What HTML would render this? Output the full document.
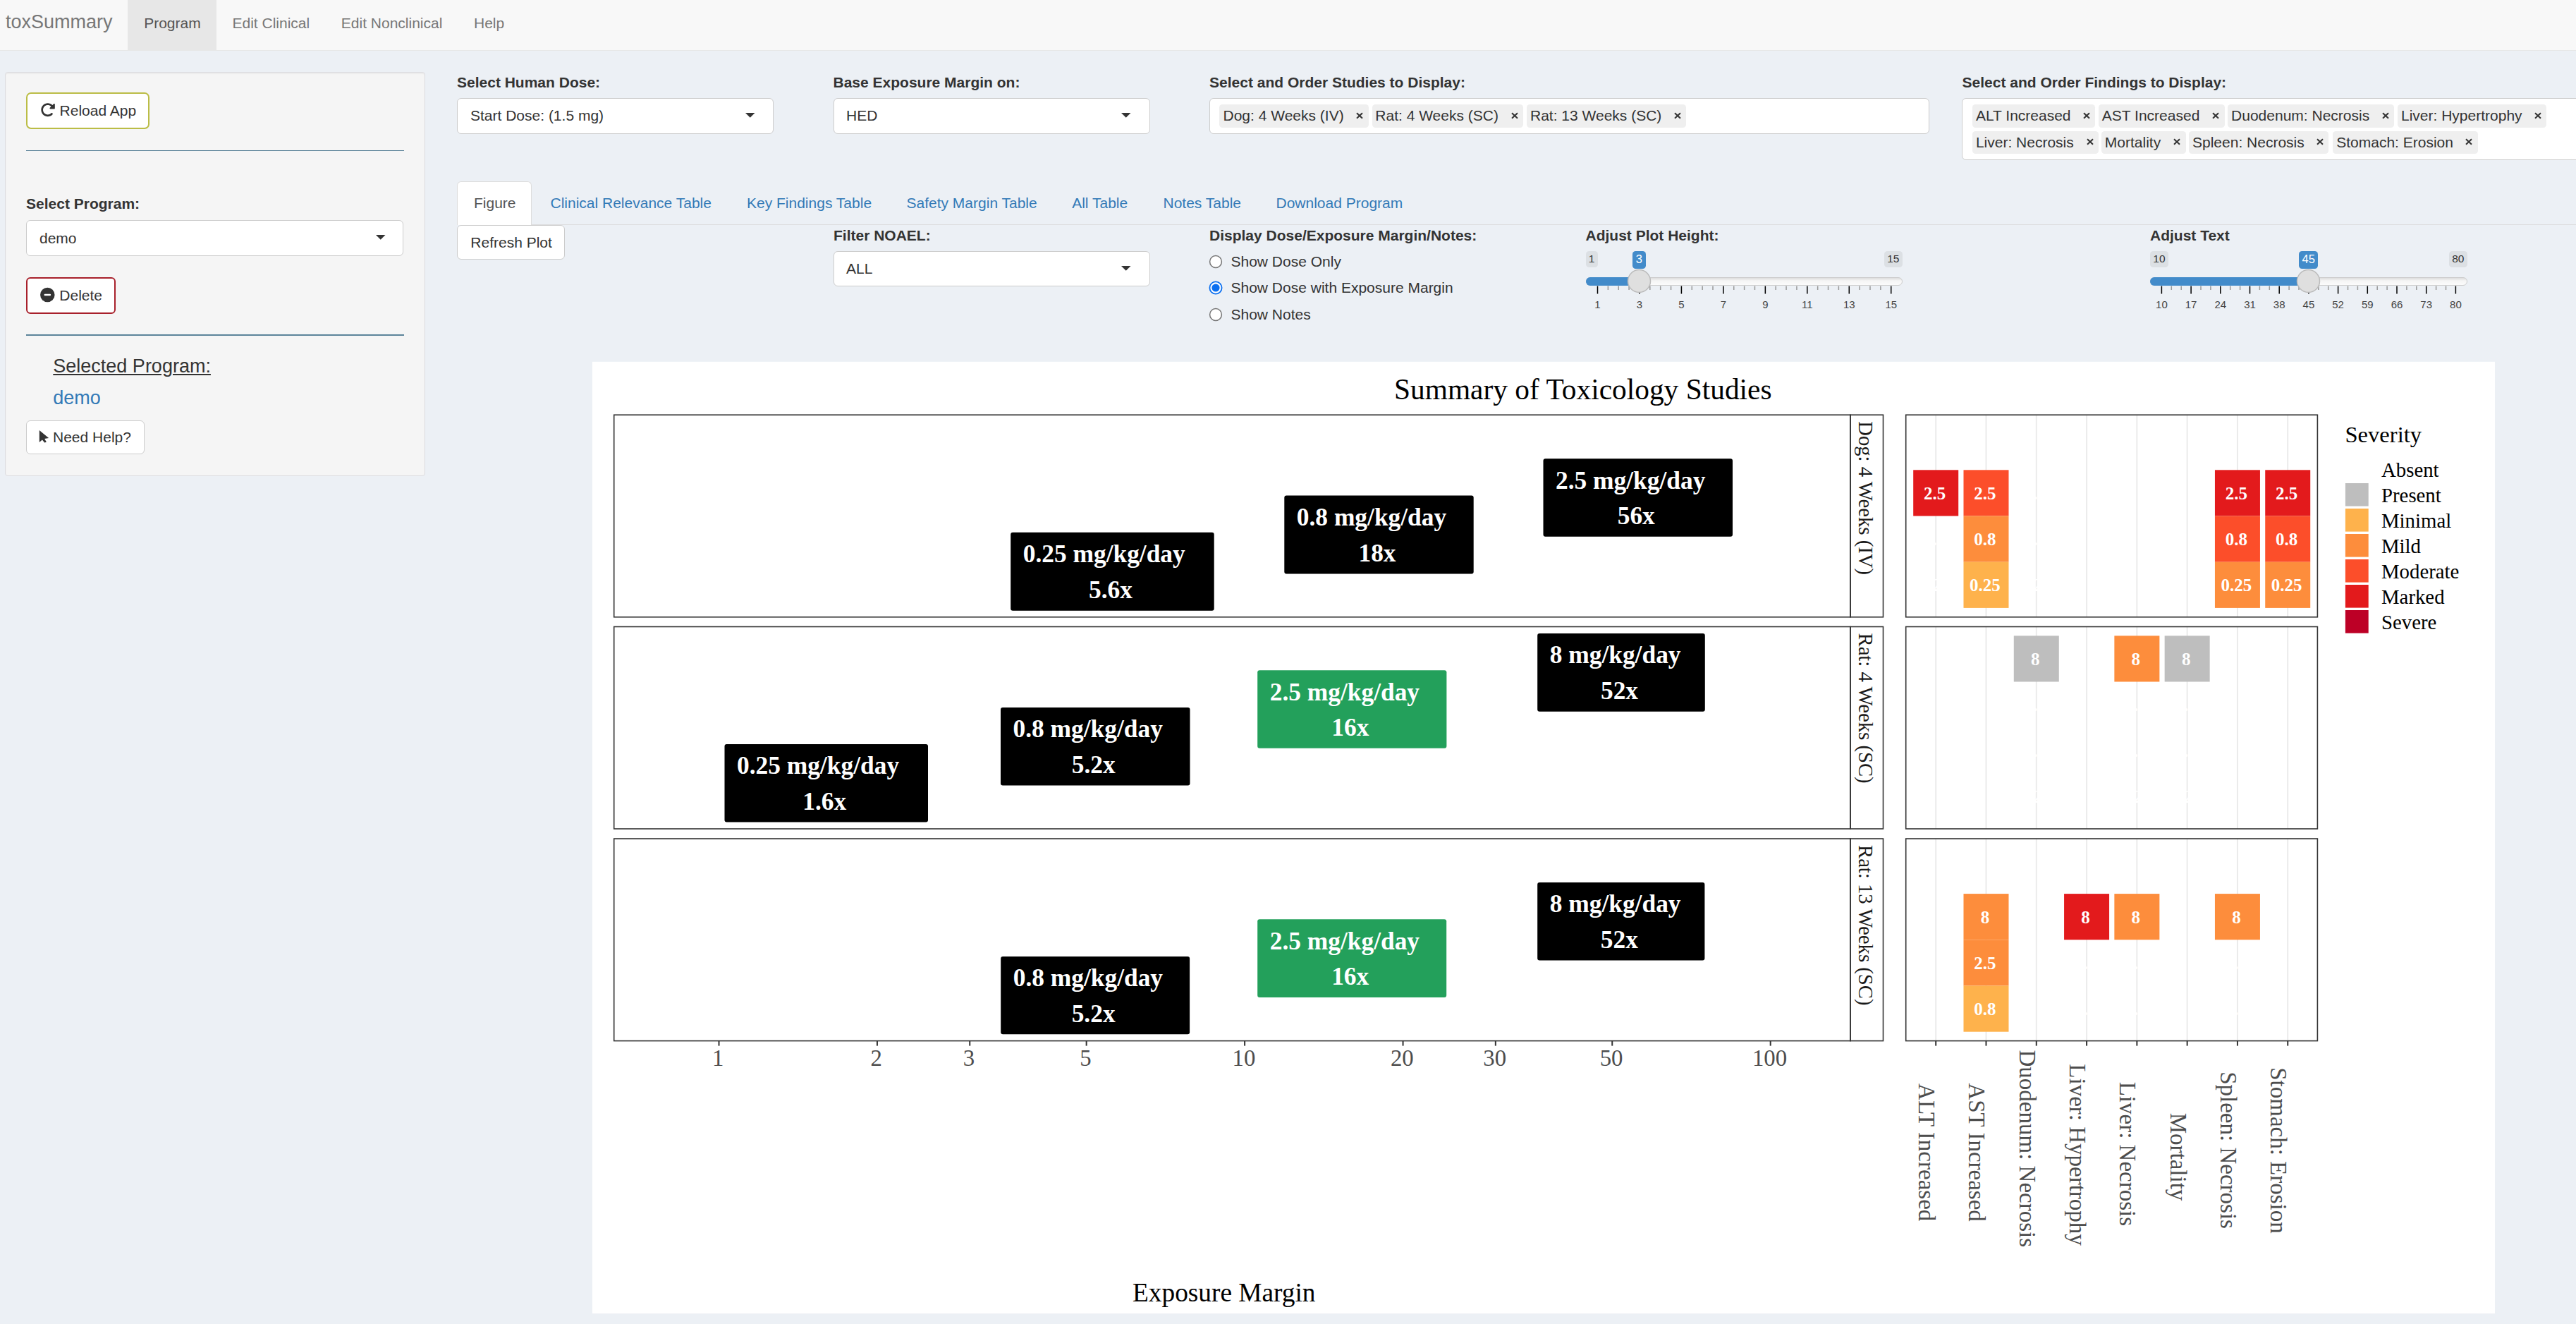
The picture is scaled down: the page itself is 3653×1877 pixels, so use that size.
<!DOCTYPE html>
<html><head><meta charset="utf-8"><title>toxSummary</title><style>
html,body{margin:0;padding:0;}
body{width:3653px;height:1877px;overflow:hidden;position:relative;background:#ECF0F5;font-family:"Liberation Sans",sans-serif;}
.t{position:absolute;line-height:1;white-space:nowrap;}
.b{position:absolute;box-sizing:border-box;}
svg{position:absolute;left:0;top:0;}
</style></head><body>
<div class="b" style="left:0.00px;top:0.00px;width:3653.00px;height:71.50px;background:#F8F8F8;border-bottom:1.5px solid #E7E7E7;"></div>
<div class="b" style="left:181.00px;top:0.00px;width:125.70px;height:71.50px;background:#E7E7E7;"></div>
<span class="t" style="left:8.00px;top:18.24px;font-size:27px;color:#777;font-weight:normal;">toxSummary</span>
<span class="t" style="left:204.20px;top:22.32px;font-size:21px;color:#555;font-weight:normal;">Program</span>
<span class="t" style="left:329.50px;top:22.32px;font-size:21px;color:#777;font-weight:normal;">Edit Clinical</span>
<span class="t" style="left:483.80px;top:22.32px;font-size:21px;color:#777;font-weight:normal;">Edit Nonclinical</span>
<span class="t" style="left:672.00px;top:22.32px;font-size:21px;color:#777;font-weight:normal;">Help</span>
<div class="b" style="left:6.60px;top:101.60px;width:596.80px;height:573.60px;background:#F5F5F5;border:1.5px solid #DCDCE0;border-radius:4px;box-shadow:inset 0 1.5px 1.5px rgba(0,0,0,.05);"></div>
<div class="b" style="left:36.80px;top:130.80px;width:175.10px;height:52.20px;background:#fff;border:2px solid #BBBD46;border-radius:7px;"></div>
<svg style="left:56.5px;top:144.5px" width="21.5" height="21.5" viewBox="0 0 512 512"><path fill="#333" d="M463.5 224H472c13.3 0 24-10.7 24-24V72c0-9.7-5.8-18.5-14.8-22.2s-19.3-1.7-26.2 5.2L413.4 96.6c-87.6-86.5-228.7-86.2-315.8 1c-87.5 87.5-87.5 229.3 0 316.8s229.3 87.5 316.8 0c12.5-12.5 12.5-32.8 0-45.3s-32.8-12.5-45.3 0c-62.5 62.5-163.8 62.5-226.3 0s-62.5-163.8 0-226.3c62.2-62.2 162.7-62.5 225.3-1L327 183c-6.9 6.9-8.9 17.2-5.2 26.2s12.5 14.8 22.2 14.8H463.5z"/></svg>
<span class="t" style="left:84.60px;top:146.22px;font-size:21px;color:#333;font-weight:normal;">Reload App</span>
<div class="b" style="left:37.00px;top:212.50px;width:535.50px;height:1.50px;background:#5B8399;"></div>
<span class="t" style="left:37.00px;top:278.47px;font-size:21px;color:#333;font-weight:bold;">Select Program:</span>
<div class="b" style="left:37.00px;top:312.00px;width:535.00px;height:50.50px;background:#fff;border:1.5px solid #CCC;border-radius:6px;"></div>
<span class="t" style="left:56.00px;top:326.92px;font-size:21px;color:#333;font-weight:normal;">demo</span>
<svg style="left:533.15px;top:333.3px" width="14" height="8"><path d="M0 0 L13.5 0 L6.75 6.75 Z" fill="#333"/></svg>
<div class="b" style="left:36.70px;top:392.70px;width:127.00px;height:52.00px;background:#fff;border:2px solid #A8202B;border-radius:6px;"></div>
<svg style="left:56px;top:406px" width="23" height="23"><circle cx="11.3" cy="12" r="10.25" fill="#333"/><rect x="6.5" y="10.7" width="9.6" height="2.6" rx="1.2" fill="#fff"/></svg>
<span class="t" style="left:84.30px;top:407.62px;font-size:21px;color:#333;font-weight:normal;">Delete</span>
<div class="b" style="left:37.00px;top:474.00px;width:535.50px;height:1.50px;background:#5B8399;"></div>
<span class="t" style="left:75.30px;top:506.14px;font-size:27px;color:#333;font-weight:normal;text-decoration:underline;">Selected Program:</span>
<span class="t" style="left:75.30px;top:551.34px;font-size:27px;color:#337AB7;font-weight:normal;">demo</span>
<div class="b" style="left:37.00px;top:595.50px;width:167.50px;height:48.90px;background:#fff;border:1.5px solid #CCC;border-radius:6px;"></div>
<svg style="left:0;top:0" width="80" height="640"><path d="M55.8 609.9 L55.8 627.0 L59.9 623.4 L63.2 627.6 L65.9 626.7 L63.2 621.9 L69.1 621.1 Z" fill="#333"/></svg>
<span class="t" style="left:75.00px;top:609.12px;font-size:21px;color:#333;font-weight:normal;">Need Help?</span>
<span class="t" style="left:648.00px;top:105.97px;font-size:21px;color:#333;font-weight:bold;">Select Human Dose:</span>
<span class="t" style="left:1181.50px;top:105.97px;font-size:21px;color:#333;font-weight:bold;">Base Exposure Margin on:</span>
<span class="t" style="left:1715.00px;top:105.97px;font-size:21px;color:#333;font-weight:bold;">Select and Order Studies to Display:</span>
<span class="t" style="left:2782.50px;top:105.97px;font-size:21px;color:#333;font-weight:bold;">Select and Order Findings to Display:</span>
<div class="b" style="left:648.00px;top:138.90px;width:448.80px;height:50.90px;background:#fff;border:1.5px solid #CCC;border-radius:6px;"></div>
<span class="t" style="left:667.00px;top:153.22px;font-size:21px;color:#333;font-weight:normal;">Start Dose: (1.5 mg)</span>
<svg style="left:1057.00px;top:160.00px" width="14" height="8"><path d="M0 0 L13.5 0 L6.75 6.75 Z" fill="#333"/></svg>
<div class="b" style="left:1181.50px;top:138.90px;width:449.70px;height:50.90px;background:#fff;border:1.5px solid #CCC;border-radius:6px;"></div>
<span class="t" style="left:1200.00px;top:153.22px;font-size:21px;color:#333;font-weight:normal;">HED</span>
<svg style="left:1590.00px;top:160.00px" width="14" height="8"><path d="M0 0 L13.5 0 L6.75 6.75 Z" fill="#333"/></svg>
<div class="b" style="left:1715.20px;top:138.90px;width:1021.05px;height:50.90px;background:#fff;border:1.5px solid #CCC;border-radius:6px;"></div>
<div class="b" style="left:1729.25px;top:148.25px;width:211.25px;height:32.25px;background:#EFEFEF;border-radius:4.5px;"></div>
<span class="t" style="left:1734.50px;top:152.97px;font-size:21px;color:#333;font-weight:normal;">Dog: 4 Weeks (IV)</span>
<svg style="left:1922.25px;top:157.57px" width="12" height="12"><path d="M2.0 2.3 L10.0 9.7 M10.0 2.3 L2.0 9.7" stroke="#333" stroke-width="2.1"/></svg>
<div class="b" style="left:1945.50px;top:148.25px;width:214.00px;height:32.25px;background:#EFEFEF;border-radius:4.5px;"></div>
<span class="t" style="left:1950.30px;top:152.97px;font-size:21px;color:#333;font-weight:normal;">Rat: 4 Weeks (SC)</span>
<svg style="left:2141.50px;top:157.57px" width="12" height="12"><path d="M2.0 2.3 L10.0 9.7 M10.0 2.3 L2.0 9.7" stroke="#333" stroke-width="2.1"/></svg>
<div class="b" style="left:2165.00px;top:148.25px;width:225.75px;height:32.25px;background:#EFEFEF;border-radius:4.5px;"></div>
<span class="t" style="left:2170.00px;top:152.97px;font-size:21px;color:#333;font-weight:normal;">Rat: 13 Weeks (SC)</span>
<svg style="left:2372.75px;top:157.57px" width="12" height="12"><path d="M2.0 2.3 L10.0 9.7 M10.0 2.3 L2.0 9.7" stroke="#333" stroke-width="2.1"/></svg>
<div class="b" style="left:2782.30px;top:138.90px;width:917.70px;height:88.10px;background:#fff;border:1.5px solid #CCC;border-radius:6px;"></div>
<div class="b" style="left:2797.10px;top:148.25px;width:174.30px;height:32.25px;background:#EFEFEF;border-radius:4.5px;"></div>
<span class="t" style="left:2801.90px;top:153.22px;font-size:21px;color:#333;font-weight:normal;">ALT Increased</span>
<svg style="left:2952.60px;top:157.57px" width="12" height="12"><path d="M2.0 2.3 L10.0 9.7 M10.0 2.3 L2.0 9.7" stroke="#333" stroke-width="2.1"/></svg>
<div class="b" style="left:2976.00px;top:148.25px;width:178.50px;height:32.25px;background:#EFEFEF;border-radius:4.5px;"></div>
<span class="t" style="left:2980.80px;top:153.22px;font-size:21px;color:#333;font-weight:normal;">AST Increased</span>
<svg style="left:3136.00px;top:157.57px" width="12" height="12"><path d="M2.0 2.3 L10.0 9.7 M10.0 2.3 L2.0 9.7" stroke="#333" stroke-width="2.1"/></svg>
<div class="b" style="left:3159.30px;top:148.25px;width:235.70px;height:32.25px;background:#EFEFEF;border-radius:4.5px;"></div>
<span class="t" style="left:3164.10px;top:153.22px;font-size:21px;color:#333;font-weight:normal;">Duodenum: Necrosis</span>
<svg style="left:3376.90px;top:157.57px" width="12" height="12"><path d="M2.0 2.3 L10.0 9.7 M10.0 2.3 L2.0 9.7" stroke="#333" stroke-width="2.1"/></svg>
<div class="b" style="left:3400.20px;top:148.25px;width:211.10px;height:32.25px;background:#EFEFEF;border-radius:4.5px;"></div>
<span class="t" style="left:3405.00px;top:153.22px;font-size:21px;color:#333;font-weight:normal;">Liver: Hypertrophy</span>
<svg style="left:3592.80px;top:157.57px" width="12" height="12"><path d="M2.0 2.3 L10.0 9.7 M10.0 2.3 L2.0 9.7" stroke="#333" stroke-width="2.1"/></svg>
<div class="b" style="left:2797.10px;top:185.70px;width:178.50px;height:31.90px;background:#EFEFEF;border-radius:4.5px;"></div>
<span class="t" style="left:2801.90px;top:190.82px;font-size:21px;color:#333;font-weight:normal;">Liver: Necrosis</span>
<svg style="left:2957.50px;top:194.85px" width="12" height="12"><path d="M2.0 2.3 L10.0 9.7 M10.0 2.3 L2.0 9.7" stroke="#333" stroke-width="2.1"/></svg>
<div class="b" style="left:2980.00px;top:185.70px;width:119.70px;height:31.90px;background:#EFEFEF;border-radius:4.5px;"></div>
<span class="t" style="left:2984.80px;top:190.82px;font-size:21px;color:#333;font-weight:normal;">Mortality</span>
<svg style="left:3081.20px;top:194.85px" width="12" height="12"><path d="M2.0 2.3 L10.0 9.7 M10.0 2.3 L2.0 9.7" stroke="#333" stroke-width="2.1"/></svg>
<div class="b" style="left:3104.20px;top:185.70px;width:198.30px;height:31.90px;background:#EFEFEF;border-radius:4.5px;"></div>
<span class="t" style="left:3109.00px;top:190.82px;font-size:21px;color:#333;font-weight:normal;">Spleen: Necrosis</span>
<svg style="left:3284.30px;top:194.85px" width="12" height="12"><path d="M2.0 2.3 L10.0 9.7 M10.0 2.3 L2.0 9.7" stroke="#333" stroke-width="2.1"/></svg>
<div class="b" style="left:3308.40px;top:185.70px;width:205.60px;height:31.90px;background:#EFEFEF;border-radius:4.5px;"></div>
<span class="t" style="left:3313.20px;top:190.82px;font-size:21px;color:#333;font-weight:normal;">Stomach: Erosion</span>
<svg style="left:3495.00px;top:194.85px" width="12" height="12"><path d="M2.0 2.3 L10.0 9.7 M10.0 2.3 L2.0 9.7" stroke="#333" stroke-width="2.1"/></svg>
<div class="b" style="left:648.00px;top:317.50px;width:3005.00px;height:1.50px;background:#DDD;"></div>
<div class="b" style="left:648.00px;top:256.80px;width:105.80px;height:62.20px;background:#fff;border:1.5px solid #DDD;border-bottom:none;border-radius:6px 6px 0 0;"></div>
<span class="t" style="left:672.00px;top:277.22px;font-size:21px;color:#555;font-weight:normal;">Figure</span>
<span class="t" style="left:780.50px;top:277.22px;font-size:21px;color:#337AB7;font-weight:normal;">Clinical Relevance Table</span>
<span class="t" style="left:1059.00px;top:277.22px;font-size:21px;color:#337AB7;font-weight:normal;">Key Findings Table</span>
<span class="t" style="left:1285.50px;top:277.22px;font-size:21px;color:#337AB7;font-weight:normal;">Safety Margin Table</span>
<span class="t" style="left:1520.20px;top:277.22px;font-size:21px;color:#337AB7;font-weight:normal;">All Table</span>
<span class="t" style="left:1649.50px;top:277.22px;font-size:21px;color:#337AB7;font-weight:normal;">Notes Table</span>
<span class="t" style="left:1809.50px;top:277.22px;font-size:21px;color:#337AB7;font-weight:normal;">Download Program</span>
<div class="b" style="left:648.00px;top:318.80px;width:153.00px;height:49.20px;background:#fff;border:1.5px solid #CCC;border-radius:6px;"></div>
<span class="t" style="left:667.30px;top:333.22px;font-size:21px;color:#333;font-weight:normal;">Refresh Plot</span>
<span class="t" style="left:1182.00px;top:322.72px;font-size:21px;color:#333;font-weight:bold;">Filter NOAEL:</span>
<div class="b" style="left:1181.50px;top:355.90px;width:449.70px;height:50.60px;background:#fff;border:1.5px solid #CCC;border-radius:6px;"></div>
<span class="t" style="left:1200.00px;top:370.22px;font-size:21px;color:#333;font-weight:normal;">ALL</span>
<svg style="left:1590.00px;top:377.00px" width="14" height="8"><path d="M0 0 L13.5 0 L6.75 6.75 Z" fill="#333"/></svg>
<span class="t" style="left:1715.00px;top:322.92px;font-size:21px;color:#333;font-weight:bold;">Display Dose/Exposure Margin/Notes:</span>
<svg style="left:1714.0px;top:360.9px" width="20" height="20"><circle cx="10" cy="10" r="8.4" fill="#fff" stroke="#767676" stroke-width="1.5"/></svg>
<span class="t" style="left:1745.50px;top:359.72px;font-size:21px;color:#333;font-weight:normal;">Show Dose Only</span>
<svg style="left:1714.0px;top:398.4px" width="20" height="20"><circle cx="10" cy="10" r="8.6" fill="#fff" stroke="#0B6FF0" stroke-width="1.8"/><circle cx="10" cy="10" r="5.6" fill="#0B6FF0"/></svg>
<span class="t" style="left:1745.50px;top:396.82px;font-size:21px;color:#333;font-weight:normal;">Show Dose with Exposure Margin</span>
<svg style="left:1714.0px;top:436.0px" width="20" height="20"><circle cx="10" cy="10" r="8.4" fill="#fff" stroke="#767676" stroke-width="1.5"/></svg>
<span class="t" style="left:1745.50px;top:434.72px;font-size:21px;color:#333;font-weight:normal;">Show Notes</span>
<span class="t" style="left:2248.50px;top:322.92px;font-size:21px;color:#333;font-weight:bold;">Adjust Plot Height:</span>
<span class="t" style="left:3049.00px;top:322.92px;font-size:21px;color:#333;font-weight:bold;">Adjust Text</span>
<div class="b" style="left:2248.75px;top:356.00px;width:16.75px;height:22.75px;background:rgba(0,0,0,0.065);border-radius:4.5px;"></div>
<span class="t" style="left:2248.75px;width:16.75px;text-align:center;top:359.48px;font-size:15.5px;color:#333">1</span>
<div class="b" style="left:2672.00px;top:356.00px;width:25.50px;height:22.75px;background:rgba(0,0,0,0.065);border-radius:4.5px;"></div>
<span class="t" style="left:2672.00px;width:25.50px;text-align:center;top:359.48px;font-size:15.5px;color:#333">15</span>
<div class="b" style="left:2315.00px;top:356.25px;width:18.75px;height:24.25px;background:#428BCA;border-radius:4.5px;"></div>
<span class="t" style="left:2315.00px;width:18.75px;text-align:center;top:359.03px;font-size:16.5px;color:#fff">3</span>
<div class="b" style="left:2248.75px;top:393.00px;width:448.75px;height:12.00px;background:linear-gradient(#DDD,#F5F5F5 40%,#FBFBFB);border:1.5px solid #CCC;border-radius:6px;"></div>
<div class="b" style="left:2248.75px;top:393.00px;width:75.50px;height:12.00px;background:#428BCA;border-radius:6px 0 0 6px;"></div>
<span class="t" style="left:2235.50px;width:60px;text-align:center;top:423.55px;font-size:15px;color:#444">1</span>
<span class="t" style="left:2294.96px;width:60px;text-align:center;top:423.55px;font-size:15px;color:#444">3</span>
<span class="t" style="left:2354.42px;width:60px;text-align:center;top:423.55px;font-size:15px;color:#444">5</span>
<span class="t" style="left:2413.88px;width:60px;text-align:center;top:423.55px;font-size:15px;color:#444">7</span>
<span class="t" style="left:2473.34px;width:60px;text-align:center;top:423.55px;font-size:15px;color:#444">9</span>
<span class="t" style="left:2532.80px;width:60px;text-align:center;top:423.55px;font-size:15px;color:#444">11</span>
<span class="t" style="left:2592.26px;width:60px;text-align:center;top:423.55px;font-size:15px;color:#444">13</span>
<span class="t" style="left:2651.72px;width:60px;text-align:center;top:423.55px;font-size:15px;color:#444">15</span>
<svg width="3653" height="460" style="left:0;top:0"><rect x="2264.75" y="405.5" width="1.5" height="11" fill="#000"/><rect x="2279.61" y="405.5" width="1.5" height="5.5" fill="#999"/><rect x="2294.48" y="405.5" width="1.5" height="5.5" fill="#999"/><rect x="2309.34" y="405.5" width="1.5" height="5.5" fill="#999"/><rect x="2324.21" y="405.5" width="1.5" height="11" fill="#000"/><rect x="2339.07" y="405.5" width="1.5" height="5.5" fill="#999"/><rect x="2353.94" y="405.5" width="1.5" height="5.5" fill="#999"/><rect x="2368.80" y="405.5" width="1.5" height="5.5" fill="#999"/><rect x="2383.67" y="405.5" width="1.5" height="11" fill="#000"/><rect x="2398.53" y="405.5" width="1.5" height="5.5" fill="#999"/><rect x="2413.40" y="405.5" width="1.5" height="5.5" fill="#999"/><rect x="2428.26" y="405.5" width="1.5" height="5.5" fill="#999"/><rect x="2443.13" y="405.5" width="1.5" height="11" fill="#000"/><rect x="2457.99" y="405.5" width="1.5" height="5.5" fill="#999"/><rect x="2472.86" y="405.5" width="1.5" height="5.5" fill="#999"/><rect x="2487.72" y="405.5" width="1.5" height="5.5" fill="#999"/><rect x="2502.59" y="405.5" width="1.5" height="11" fill="#000"/><rect x="2517.45" y="405.5" width="1.5" height="5.5" fill="#999"/><rect x="2532.32" y="405.5" width="1.5" height="5.5" fill="#999"/><rect x="2547.18" y="405.5" width="1.5" height="5.5" fill="#999"/><rect x="2562.05" y="405.5" width="1.5" height="11" fill="#000"/><rect x="2576.91" y="405.5" width="1.5" height="5.5" fill="#999"/><rect x="2591.78" y="405.5" width="1.5" height="5.5" fill="#999"/><rect x="2606.64" y="405.5" width="1.5" height="5.5" fill="#999"/><rect x="2621.51" y="405.5" width="1.5" height="11" fill="#000"/><rect x="2636.38" y="405.5" width="1.5" height="5.5" fill="#999"/><rect x="2651.24" y="405.5" width="1.5" height="5.5" fill="#999"/><rect x="2666.11" y="405.5" width="1.5" height="5.5" fill="#999"/><rect x="2680.97" y="405.5" width="1.5" height="11" fill="#000"/></svg>
<svg style="left:2306.8px;top:380.5px" width="35" height="35"><circle cx="17.5" cy="17.5" r="16" fill="#DFDFDF" stroke="#BBB" stroke-width="1.5"/></svg>
<div class="b" style="left:3049.00px;top:356.00px;width:25.80px;height:22.75px;background:rgba(0,0,0,0.065);border-radius:4.5px;"></div>
<span class="t" style="left:3049.00px;width:25.80px;text-align:center;top:359.48px;font-size:15.5px;color:#333">10</span>
<div class="b" style="left:3473.00px;top:356.00px;width:25.60px;height:22.75px;background:rgba(0,0,0,0.065);border-radius:4.5px;"></div>
<span class="t" style="left:3473.00px;width:25.60px;text-align:center;top:359.48px;font-size:15.5px;color:#333">80</span>
<div class="b" style="left:3260.30px;top:356.25px;width:26.70px;height:24.25px;background:#428BCA;border-radius:4.5px;"></div>
<span class="t" style="left:3260.30px;width:26.70px;text-align:center;top:359.03px;font-size:16.5px;color:#fff">45</span>
<div class="b" style="left:3049.00px;top:393.00px;width:449.60px;height:12.00px;background:linear-gradient(#DDD,#F5F5F5 40%,#FBFBFB);border:1.5px solid #CCC;border-radius:6px;"></div>
<div class="b" style="left:3049.00px;top:393.00px;width:224.80px;height:12.00px;background:#428BCA;border-radius:6px 0 0 6px;"></div>
<span class="t" style="left:3035.40px;width:60px;text-align:center;top:423.55px;font-size:15px;color:#444">10</span>
<span class="t" style="left:3077.10px;width:60px;text-align:center;top:423.55px;font-size:15px;color:#444">17</span>
<span class="t" style="left:3118.80px;width:60px;text-align:center;top:423.55px;font-size:15px;color:#444">24</span>
<span class="t" style="left:3160.50px;width:60px;text-align:center;top:423.55px;font-size:15px;color:#444">31</span>
<span class="t" style="left:3202.20px;width:60px;text-align:center;top:423.55px;font-size:15px;color:#444">38</span>
<span class="t" style="left:3243.90px;width:60px;text-align:center;top:423.55px;font-size:15px;color:#444">45</span>
<span class="t" style="left:3285.60px;width:60px;text-align:center;top:423.55px;font-size:15px;color:#444">52</span>
<span class="t" style="left:3327.30px;width:60px;text-align:center;top:423.55px;font-size:15px;color:#444">59</span>
<span class="t" style="left:3369.00px;width:60px;text-align:center;top:423.55px;font-size:15px;color:#444">66</span>
<span class="t" style="left:3410.70px;width:60px;text-align:center;top:423.55px;font-size:15px;color:#444">73</span>
<span class="t" style="left:3452.40px;width:60px;text-align:center;top:423.55px;font-size:15px;color:#444">80</span>
<svg width="3653" height="460" style="left:0;top:0"><rect x="3064.65" y="405.5" width="1.5" height="11" fill="#000"/><rect x="3078.55" y="405.5" width="1.5" height="5.5" fill="#999"/><rect x="3092.45" y="405.5" width="1.5" height="5.5" fill="#999"/><rect x="3106.35" y="405.5" width="1.5" height="11" fill="#000"/><rect x="3120.25" y="405.5" width="1.5" height="5.5" fill="#999"/><rect x="3134.15" y="405.5" width="1.5" height="5.5" fill="#999"/><rect x="3148.05" y="405.5" width="1.5" height="11" fill="#000"/><rect x="3161.95" y="405.5" width="1.5" height="5.5" fill="#999"/><rect x="3175.85" y="405.5" width="1.5" height="5.5" fill="#999"/><rect x="3189.75" y="405.5" width="1.5" height="11" fill="#000"/><rect x="3203.65" y="405.5" width="1.5" height="5.5" fill="#999"/><rect x="3217.55" y="405.5" width="1.5" height="5.5" fill="#999"/><rect x="3231.45" y="405.5" width="1.5" height="11" fill="#000"/><rect x="3245.35" y="405.5" width="1.5" height="5.5" fill="#999"/><rect x="3259.25" y="405.5" width="1.5" height="5.5" fill="#999"/><rect x="3273.15" y="405.5" width="1.5" height="11" fill="#000"/><rect x="3287.05" y="405.5" width="1.5" height="5.5" fill="#999"/><rect x="3300.95" y="405.5" width="1.5" height="5.5" fill="#999"/><rect x="3314.85" y="405.5" width="1.5" height="11" fill="#000"/><rect x="3328.75" y="405.5" width="1.5" height="5.5" fill="#999"/><rect x="3342.65" y="405.5" width="1.5" height="5.5" fill="#999"/><rect x="3356.55" y="405.5" width="1.5" height="11" fill="#000"/><rect x="3370.45" y="405.5" width="1.5" height="5.5" fill="#999"/><rect x="3384.35" y="405.5" width="1.5" height="5.5" fill="#999"/><rect x="3398.25" y="405.5" width="1.5" height="11" fill="#000"/><rect x="3412.15" y="405.5" width="1.5" height="5.5" fill="#999"/><rect x="3426.05" y="405.5" width="1.5" height="5.5" fill="#999"/><rect x="3439.95" y="405.5" width="1.5" height="11" fill="#000"/><rect x="3453.85" y="405.5" width="1.5" height="5.5" fill="#999"/><rect x="3467.75" y="405.5" width="1.5" height="5.5" fill="#999"/><rect x="3481.65" y="405.5" width="1.5" height="11" fill="#000"/></svg>
<svg style="left:3256.3px;top:380.5px" width="35" height="35"><circle cx="17.5" cy="17.5" r="16" fill="#DFDFDF" stroke="#BBB" stroke-width="1.5"/></svg>
<svg width="3653" height="1877"><rect x="840" y="512.8" width="2698" height="1349.3" fill="#fff"/><text x="1977" y="565.5" font-family="Liberation Serif" font-size="41.4" fill="#000">Summary of Toxicology Studies</text><rect x="2744.20" y="588.20" width="2" height="286.60" fill="#EBEBEB"/><rect x="2815.49" y="588.20" width="2" height="286.60" fill="#EBEBEB"/><rect x="2886.78" y="588.20" width="2" height="286.60" fill="#EBEBEB"/><rect x="2958.07" y="588.20" width="2" height="286.60" fill="#EBEBEB"/><rect x="3029.36" y="588.20" width="2" height="286.60" fill="#EBEBEB"/><rect x="3100.65" y="588.20" width="2" height="286.60" fill="#EBEBEB"/><rect x="3171.94" y="588.20" width="2" height="286.60" fill="#EBEBEB"/><rect x="3243.23" y="588.20" width="2" height="286.60" fill="#EBEBEB"/><rect x="2744.20" y="888.50" width="2" height="286.50" fill="#EBEBEB"/><rect x="2815.49" y="888.50" width="2" height="286.50" fill="#EBEBEB"/><rect x="2886.78" y="888.50" width="2" height="286.50" fill="#EBEBEB"/><rect x="2958.07" y="888.50" width="2" height="286.50" fill="#EBEBEB"/><rect x="3029.36" y="888.50" width="2" height="286.50" fill="#EBEBEB"/><rect x="3100.65" y="888.50" width="2" height="286.50" fill="#EBEBEB"/><rect x="3171.94" y="888.50" width="2" height="286.50" fill="#EBEBEB"/><rect x="3243.23" y="888.50" width="2" height="286.50" fill="#EBEBEB"/><rect x="2744.20" y="1189.00" width="2" height="286.60" fill="#EBEBEB"/><rect x="2815.49" y="1189.00" width="2" height="286.60" fill="#EBEBEB"/><rect x="2886.78" y="1189.00" width="2" height="286.60" fill="#EBEBEB"/><rect x="2958.07" y="1189.00" width="2" height="286.60" fill="#EBEBEB"/><rect x="3029.36" y="1189.00" width="2" height="286.60" fill="#EBEBEB"/><rect x="3100.65" y="1189.00" width="2" height="286.60" fill="#EBEBEB"/><rect x="3171.94" y="1189.00" width="2" height="286.60" fill="#EBEBEB"/><rect x="3243.23" y="1189.00" width="2" height="286.60" fill="#EBEBEB"/><rect x="870.70" y="588.20" width="1753.30" height="286.60" fill="none" stroke="#333" stroke-width="1.6"/><rect x="2624" y="588.20" width="46.5" height="286.60" fill="none" stroke="#333" stroke-width="1.6"/><rect x="2702.7" y="588.20" width="583.70" height="286.60" fill="none" stroke="#333" stroke-width="1.6"/><text transform="translate(2636,597.20) rotate(90)" font-family="Liberation Serif" font-size="28.7" fill="#1A1A1A">Dog: 4 Weeks (IV)</text><rect x="870.70" y="888.50" width="1753.30" height="286.50" fill="none" stroke="#333" stroke-width="1.6"/><rect x="2624" y="888.50" width="46.5" height="286.50" fill="none" stroke="#333" stroke-width="1.6"/><rect x="2702.7" y="888.50" width="583.70" height="286.50" fill="none" stroke="#333" stroke-width="1.6"/><text transform="translate(2636,897.50) rotate(90)" font-family="Liberation Serif" font-size="28.7" fill="#1A1A1A">Rat: 4 Weeks (SC)</text><rect x="870.70" y="1189.00" width="1753.30" height="286.60" fill="none" stroke="#333" stroke-width="1.6"/><rect x="2624" y="1189.00" width="46.5" height="286.60" fill="none" stroke="#333" stroke-width="1.6"/><rect x="2702.7" y="1189.00" width="583.70" height="286.60" fill="none" stroke="#333" stroke-width="1.6"/><text transform="translate(2636,1198.00) rotate(90)" font-family="Liberation Serif" font-size="28.7" fill="#1A1A1A">Rat: 13 Weeks (SC)</text><rect x="1433.20" y="754.80" width="288.50" height="110.90" rx="3" fill="#000"/><text x="1450.70" y="797.10" font-family="Liberation Serif" font-weight="bold" font-size="35.4" fill="#fff">0.25 mg/kg/day</text><text x="1574.95" y="847.80" font-family="Liberation Serif" font-weight="bold" font-size="35.4" fill="#fff" text-anchor="middle">5.6x</text><rect x="1821.30" y="702.60" width="268.40" height="110.80" rx="3" fill="#000"/><text x="1838.80" y="744.90" font-family="Liberation Serif" font-weight="bold" font-size="35.4" fill="#fff">0.8 mg/kg/day</text><text x="1953.00" y="795.60" font-family="Liberation Serif" font-weight="bold" font-size="35.4" fill="#fff" text-anchor="middle">18x</text><rect x="2188.50" y="650.30" width="268.50" height="110.40" rx="3" fill="#000"/><text x="2206.00" y="692.60" font-family="Liberation Serif" font-weight="bold" font-size="35.4" fill="#fff">2.5 mg/kg/day</text><text x="2320.25" y="743.30" font-family="Liberation Serif" font-weight="bold" font-size="35.4" fill="#fff" text-anchor="middle">56x</text><rect x="1027.50" y="1055.00" width="288.50" height="110.40" rx="3" fill="#000"/><text x="1045.00" y="1097.30" font-family="Liberation Serif" font-weight="bold" font-size="35.4" fill="#fff">0.25 mg/kg/day</text><text x="1169.25" y="1148.00" font-family="Liberation Serif" font-weight="bold" font-size="35.4" fill="#fff" text-anchor="middle">1.6x</text><rect x="1419.00" y="1003.00" width="268.50" height="110.50" rx="3" fill="#000"/><text x="1436.50" y="1045.30" font-family="Liberation Serif" font-weight="bold" font-size="35.4" fill="#fff">0.8 mg/kg/day</text><text x="1550.75" y="1096.00" font-family="Liberation Serif" font-weight="bold" font-size="35.4" fill="#fff" text-anchor="middle">5.2x</text><rect x="1783.20" y="950.30" width="268.20" height="110.50" rx="3" fill="#23A05B"/><text x="1800.70" y="992.60" font-family="Liberation Serif" font-weight="bold" font-size="35.4" fill="#fff">2.5 mg/kg/day</text><text x="1914.80" y="1043.30" font-family="Liberation Serif" font-weight="bold" font-size="35.4" fill="#fff" text-anchor="middle">16x</text><rect x="2180.20" y="898.10" width="237.60" height="110.60" rx="3" fill="#000"/><text x="2197.70" y="940.40" font-family="Liberation Serif" font-weight="bold" font-size="35.4" fill="#fff">8 mg/kg/day</text><text x="2296.50" y="991.10" font-family="Liberation Serif" font-weight="bold" font-size="35.4" fill="#fff" text-anchor="middle">52x</text><rect x="1419.20" y="1355.90" width="267.90" height="110.30" rx="3" fill="#000"/><text x="1436.70" y="1398.20" font-family="Liberation Serif" font-weight="bold" font-size="35.4" fill="#fff">0.8 mg/kg/day</text><text x="1550.65" y="1448.90" font-family="Liberation Serif" font-weight="bold" font-size="35.4" fill="#fff" text-anchor="middle">5.2x</text><rect x="1783.20" y="1303.20" width="268.00" height="110.90" rx="3" fill="#23A05B"/><text x="1800.70" y="1345.50" font-family="Liberation Serif" font-weight="bold" font-size="35.4" fill="#fff">2.5 mg/kg/day</text><text x="1914.70" y="1396.20" font-family="Liberation Serif" font-weight="bold" font-size="35.4" fill="#fff" text-anchor="middle">16x</text><rect x="2180.20" y="1251.00" width="237.20" height="110.40" rx="3" fill="#000"/><text x="2197.70" y="1293.30" font-family="Liberation Serif" font-weight="bold" font-size="35.4" fill="#fff">8 mg/kg/day</text><text x="2296.30" y="1344.00" font-family="Liberation Serif" font-weight="bold" font-size="35.4" fill="#fff" text-anchor="middle">52x</text><rect x="1018.50" y="1475.6" width="2" height="7" fill="#333"/><text x="1018.30" y="1511" font-family="Liberation Serif" font-size="32.8" fill="#4D4D4D" text-anchor="middle">1</text><rect x="1242.95" y="1475.6" width="2" height="7" fill="#333"/><text x="1242.75" y="1511" font-family="Liberation Serif" font-size="32.8" fill="#4D4D4D" text-anchor="middle">2</text><rect x="1374.24" y="1475.6" width="2" height="7" fill="#333"/><text x="1374.04" y="1511" font-family="Liberation Serif" font-size="32.8" fill="#4D4D4D" text-anchor="middle">3</text><rect x="1539.65" y="1475.6" width="2" height="7" fill="#333"/><text x="1539.45" y="1511" font-family="Liberation Serif" font-size="32.8" fill="#4D4D4D" text-anchor="middle">5</text><rect x="1764.10" y="1475.6" width="2" height="7" fill="#333"/><text x="1763.90" y="1511" font-family="Liberation Serif" font-size="32.8" fill="#4D4D4D" text-anchor="middle">10</text><rect x="1988.55" y="1475.6" width="2" height="7" fill="#333"/><text x="1988.35" y="1511" font-family="Liberation Serif" font-size="32.8" fill="#4D4D4D" text-anchor="middle">20</text><rect x="2119.84" y="1475.6" width="2" height="7" fill="#333"/><text x="2119.64" y="1511" font-family="Liberation Serif" font-size="32.8" fill="#4D4D4D" text-anchor="middle">30</text><rect x="2285.25" y="1475.6" width="2" height="7" fill="#333"/><text x="2285.05" y="1511" font-family="Liberation Serif" font-size="32.8" fill="#4D4D4D" text-anchor="middle">50</text><rect x="2509.70" y="1475.6" width="2" height="7" fill="#333"/><text x="2509.50" y="1511" font-family="Liberation Serif" font-size="32.8" fill="#4D4D4D" text-anchor="middle">100</text><text x="1606" y="1844.5" font-family="Liberation Serif" font-size="37.35" fill="#000">Exposure Margin</text><rect x="2713.20" y="666.30" width="64" height="65.2" fill="#E31A1C"/><text x="2743.70" y="707.80" font-family="Liberation Serif" font-weight="bold" font-size="25" fill="#fff" text-anchor="middle">2.5</text><rect x="2784.49" y="666.30" width="64" height="65.2" fill="#FC4E2A"/><text x="2814.99" y="707.80" font-family="Liberation Serif" font-weight="bold" font-size="25" fill="#fff" text-anchor="middle">2.5</text><rect x="2784.49" y="731.50" width="64" height="65.2" fill="#FD8D3C"/><text x="2814.99" y="773.00" font-family="Liberation Serif" font-weight="bold" font-size="25" fill="#fff" text-anchor="middle">0.8</text><rect x="2784.49" y="796.70" width="64" height="65.2" fill="#FEB24C"/><text x="2814.99" y="838.20" font-family="Liberation Serif" font-weight="bold" font-size="25" fill="#fff" text-anchor="middle">0.25</text><rect x="3140.94" y="666.30" width="64" height="65.2" fill="#E31A1C"/><text x="3171.44" y="707.80" font-family="Liberation Serif" font-weight="bold" font-size="25" fill="#fff" text-anchor="middle">2.5</text><rect x="3140.94" y="731.50" width="64" height="65.2" fill="#FC4E2A"/><text x="3171.44" y="773.00" font-family="Liberation Serif" font-weight="bold" font-size="25" fill="#fff" text-anchor="middle">0.8</text><rect x="3140.94" y="796.70" width="64" height="65.2" fill="#FD8D3C"/><text x="3171.44" y="838.20" font-family="Liberation Serif" font-weight="bold" font-size="25" fill="#fff" text-anchor="middle">0.25</text><rect x="3212.23" y="666.30" width="64" height="65.2" fill="#E31A1C"/><text x="3242.73" y="707.80" font-family="Liberation Serif" font-weight="bold" font-size="25" fill="#fff" text-anchor="middle">2.5</text><rect x="3212.23" y="731.50" width="64" height="65.2" fill="#FC4E2A"/><text x="3242.73" y="773.00" font-family="Liberation Serif" font-weight="bold" font-size="25" fill="#fff" text-anchor="middle">0.8</text><rect x="3212.23" y="796.70" width="64" height="65.2" fill="#FD8D3C"/><text x="3242.73" y="838.20" font-family="Liberation Serif" font-weight="bold" font-size="25" fill="#fff" text-anchor="middle">0.25</text><rect x="2855.78" y="901.30" width="64" height="65.2" fill="#BEBEBE"/><text x="2886.28" y="942.80" font-family="Liberation Serif" font-weight="bold" font-size="25" fill="#fff" text-anchor="middle">8</text><rect x="2998.36" y="901.30" width="64" height="65.2" fill="#FD8D3C"/><text x="3028.86" y="942.80" font-family="Liberation Serif" font-weight="bold" font-size="25" fill="#fff" text-anchor="middle">8</text><rect x="3069.65" y="901.30" width="64" height="65.2" fill="#BEBEBE"/><text x="3100.15" y="942.80" font-family="Liberation Serif" font-weight="bold" font-size="25" fill="#fff" text-anchor="middle">8</text><rect x="2784.49" y="1267.10" width="64" height="65.2" fill="#FD8D3C"/><text x="2814.99" y="1308.60" font-family="Liberation Serif" font-weight="bold" font-size="25" fill="#fff" text-anchor="middle">8</text><rect x="2784.49" y="1332.30" width="64" height="65.2" fill="#FD8D3C"/><text x="2814.99" y="1373.80" font-family="Liberation Serif" font-weight="bold" font-size="25" fill="#fff" text-anchor="middle">2.5</text><rect x="2784.49" y="1397.50" width="64" height="65.2" fill="#FEB24C"/><text x="2814.99" y="1439.00" font-family="Liberation Serif" font-weight="bold" font-size="25" fill="#fff" text-anchor="middle">0.8</text><rect x="2927.07" y="1267.10" width="64" height="65.2" fill="#E31A1C"/><text x="2957.57" y="1308.60" font-family="Liberation Serif" font-weight="bold" font-size="25" fill="#fff" text-anchor="middle">8</text><rect x="2998.36" y="1267.10" width="64" height="65.2" fill="#FD8D3C"/><text x="3028.86" y="1308.60" font-family="Liberation Serif" font-weight="bold" font-size="25" fill="#fff" text-anchor="middle">8</text><rect x="3140.94" y="1267.10" width="64" height="65.2" fill="#FD8D3C"/><text x="3171.44" y="1308.60" font-family="Liberation Serif" font-weight="bold" font-size="25" fill="#fff" text-anchor="middle">8</text><text x="2743.70" y="773.00" font-family="Liberation Serif" font-weight="bold" font-size="25" fill="#fff" text-anchor="middle">0.8</text><text x="2743.70" y="838.20" font-family="Liberation Serif" font-weight="bold" font-size="25" fill="#fff" text-anchor="middle">0.25</text><text x="2886.28" y="707.80" font-family="Liberation Serif" font-weight="bold" font-size="25" fill="#fff" text-anchor="middle">2.5</text><text x="2886.28" y="773.00" font-family="Liberation Serif" font-weight="bold" font-size="25" fill="#fff" text-anchor="middle">0.8</text><text x="2886.28" y="838.20" font-family="Liberation Serif" font-weight="bold" font-size="25" fill="#fff" text-anchor="middle">0.25</text><text x="2886.28" y="1008.00" font-family="Liberation Serif" font-weight="bold" font-size="25" fill="#fff" text-anchor="middle">2.5</text><text x="2886.28" y="1073.20" font-family="Liberation Serif" font-weight="bold" font-size="25" fill="#fff" text-anchor="middle">0.8</text><text x="2886.28" y="1138.40" font-family="Liberation Serif" font-weight="bold" font-size="25" fill="#fff" text-anchor="middle">0.25</text><text x="3028.86" y="1008.00" font-family="Liberation Serif" font-weight="bold" font-size="25" fill="#fff" text-anchor="middle">2.5</text><text x="3028.86" y="1073.20" font-family="Liberation Serif" font-weight="bold" font-size="25" fill="#fff" text-anchor="middle">0.8</text><text x="3028.86" y="1138.40" font-family="Liberation Serif" font-weight="bold" font-size="25" fill="#fff" text-anchor="middle">0.25</text><text x="3100.15" y="1008.00" font-family="Liberation Serif" font-weight="bold" font-size="25" fill="#fff" text-anchor="middle">2.5</text><text x="3100.15" y="1073.20" font-family="Liberation Serif" font-weight="bold" font-size="25" fill="#fff" text-anchor="middle">0.8</text><text x="3100.15" y="1138.40" font-family="Liberation Serif" font-weight="bold" font-size="25" fill="#fff" text-anchor="middle">0.25</text><text x="2957.57" y="1373.80" font-family="Liberation Serif" font-weight="bold" font-size="25" fill="#fff" text-anchor="middle">2.5</text><text x="2957.57" y="1439.00" font-family="Liberation Serif" font-weight="bold" font-size="25" fill="#fff" text-anchor="middle">0.8</text><text x="3028.86" y="1373.80" font-family="Liberation Serif" font-weight="bold" font-size="25" fill="#fff" text-anchor="middle">2.5</text><text x="3028.86" y="1439.00" font-family="Liberation Serif" font-weight="bold" font-size="25" fill="#fff" text-anchor="middle">0.8</text><text x="3171.44" y="1373.80" font-family="Liberation Serif" font-weight="bold" font-size="25" fill="#fff" text-anchor="middle">2.5</text><text x="3171.44" y="1439.00" font-family="Liberation Serif" font-weight="bold" font-size="25" fill="#fff" text-anchor="middle">0.8</text><rect x="2744.20" y="1475.6" width="2" height="7" fill="#333"/><text transform="translate(2721.20,1536.10) rotate(90)" font-family="Liberation Serif" font-size="33" fill="#4D4D4D">ALT Increased</text><rect x="2815.49" y="1475.6" width="2" height="7" fill="#333"/><text transform="translate(2792.49,1535.40) rotate(90)" font-family="Liberation Serif" font-size="33" fill="#4D4D4D">AST Increased</text><rect x="2886.78" y="1475.6" width="2" height="7" fill="#333"/><text transform="translate(2863.78,1488.50) rotate(90)" font-family="Liberation Serif" font-size="33" fill="#4D4D4D">Duodenum: Necrosis</text><rect x="2958.07" y="1475.6" width="2" height="7" fill="#333"/><text transform="translate(2935.07,1508.30) rotate(90)" font-family="Liberation Serif" font-size="33" fill="#4D4D4D">Liver: Hypertrophy</text><rect x="3029.36" y="1475.6" width="2" height="7" fill="#333"/><text transform="translate(3006.36,1533.70) rotate(90)" font-family="Liberation Serif" font-size="33" fill="#4D4D4D">Liver: Necrosis</text><rect x="3100.65" y="1475.6" width="2" height="7" fill="#333"/><text transform="translate(3077.65,1577.70) rotate(90)" font-family="Liberation Serif" font-size="33" fill="#4D4D4D">Mortality</text><rect x="3171.94" y="1475.6" width="2" height="7" fill="#333"/><text transform="translate(3148.94,1519.20) rotate(90)" font-family="Liberation Serif" font-size="33" fill="#4D4D4D">Spleen: Necrosis</text><rect x="3243.23" y="1475.6" width="2" height="7" fill="#333"/><text transform="translate(3220.23,1513.20) rotate(90)" font-family="Liberation Serif" font-size="33" fill="#4D4D4D">Stomach: Erosion</text><text x="3325.5" y="626.7" font-family="Liberation Serif" font-size="32.6" fill="#000">Severity</text><text x="3377" y="675.80" font-family="Liberation Serif" font-size="28.8" fill="#000">Absent</text><rect x="3325.9" y="685.00" width="32.8" height="32.6" fill="#BEBEBE"/><text x="3377" y="711.80" font-family="Liberation Serif" font-size="28.8" fill="#000">Present</text><rect x="3325.9" y="721.00" width="32.8" height="32.6" fill="#FEB24C"/><text x="3377" y="747.80" font-family="Liberation Serif" font-size="28.8" fill="#000">Minimal</text><rect x="3325.9" y="757.00" width="32.8" height="32.6" fill="#FD8D3C"/><text x="3377" y="783.80" font-family="Liberation Serif" font-size="28.8" fill="#000">Mild</text><rect x="3325.9" y="793.00" width="32.8" height="32.6" fill="#FC4E2A"/><text x="3377" y="819.80" font-family="Liberation Serif" font-size="28.8" fill="#000">Moderate</text><rect x="3325.9" y="829.00" width="32.8" height="32.6" fill="#E31A1C"/><text x="3377" y="855.80" font-family="Liberation Serif" font-size="28.8" fill="#000">Marked</text><rect x="3325.9" y="865.00" width="32.8" height="32.6" fill="#BD0026"/><text x="3377" y="891.80" font-family="Liberation Serif" font-size="28.8" fill="#000">Severe</text></svg>
</body></html>
